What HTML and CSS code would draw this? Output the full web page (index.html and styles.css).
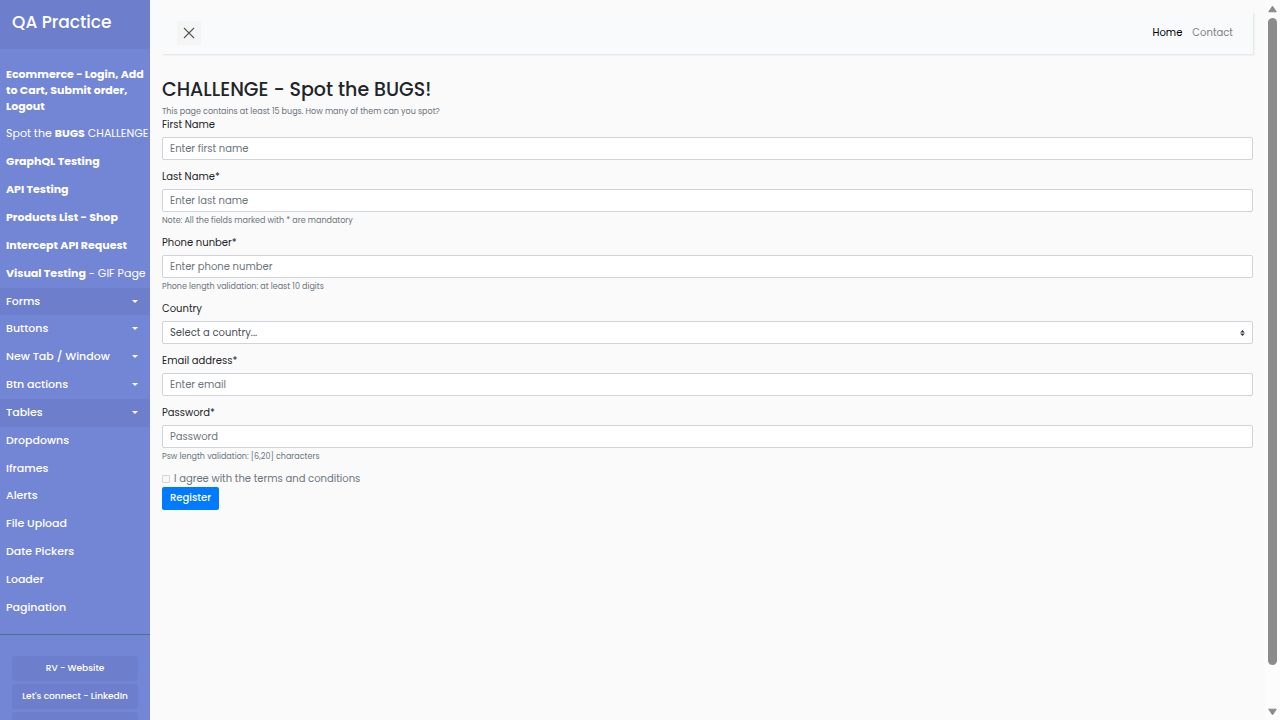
FILE: index.html
```html
<!DOCTYPE html>
<html lang="en">
<head>
<meta charset="utf-8">
<meta name="viewport" content="width=device-width, initial-scale=1">
<title>QA Practice</title>
<link rel="stylesheet" href="styles.css">
</head>
<body>
<div class="wrapper">
  <nav class="sidebar" aria-label="Sections">
    <header class="sidebar-header"><h3 class="brand">QA Practice</h3></header>
    <ul class="menu">
      <li><a class="menu-link strong lead" href="#">Ecommerce - Login, Add to Cart, Submit order, Logout</a></li>
      <li><a class="menu-link nowrap" href="#">Spot the <b>BUGS</b> CHALLENGE</a></li>
      <li><a class="menu-link strong" href="#">GraphQL Testing</a></li>
      <li><a class="menu-link strong" href="#">API Testing</a></li>
      <li><a class="menu-link strong" href="#">Products List - Shop</a></li>
      <li><a class="menu-link strong" href="#">Intercept API Request</a></li>
      <li><a class="menu-link nowrap" href="#"><b>Visual Testing</b> - GIF Page</a></li>
      <li><a class="menu-link toggle active compact" href="#">Forms</a></li>
      <li><a class="menu-link toggle" href="#">Buttons</a></li>
      <li><a class="menu-link toggle" href="#">New Tab / Window</a></li>
      <li><a class="menu-link toggle" href="#">Btn actions</a></li>
      <li><a class="menu-link toggle active" href="#">Tables</a></li>
      <li><a class="menu-link medium" href="#">Dropdowns</a></li>
      <li><a class="menu-link medium compact" href="#">Iframes</a></li>
      <li><a class="menu-link medium" href="#">Alerts</a></li>
      <li><a class="menu-link medium" href="#">File Upload</a></li>
      <li><a class="menu-link medium" href="#">Date Pickers</a></li>
      <li><a class="menu-link medium" href="#">Loader</a></li>
      <li><a class="menu-link medium" href="#">Pagination</a></li>
    </ul>
    <ul class="ctas">
      <li><a class="cta" href="#">RV - Website</a></li>
      <li><a class="cta" href="#">Let's connect - LinkedIn</a></li>
      <li><a class="cta" href="#" aria-label="More"></a></li>
    </ul>
  </nav>

  <main class="content">
    <nav class="navbar" aria-label="Main">
      <button class="collapse" type="button" aria-label="Toggle sidebar">
        <svg width="12" height="12" viewBox="0 0 12 12"><path d="M1 1l10 10M11 1L1 11" fill="none" stroke="#555" stroke-width="1.1"/></svg>
      </button>
      <div class="nav-links">
        <a class="nav-link current" href="#">Home</a>
        <a class="nav-link" href="#">Contact</a>
      </div>
    </nav>

    <h2 class="title">CHALLENGE - Spot the BUGS!</h2>
    <p class="intro">This page contains at least 15 bugs. How many of them can you spot?</p>

    <form class="form">
      <div class="group">
        <label class="label" for="first">First Name</label>
        <input class="control" id="first" type="text" placeholder="Enter first name">
      </div>
      <div class="group">
        <label class="label" for="last">Last Name*</label>
        <input class="control" id="last" type="text" placeholder="Enter last name">
        <small class="hint">Note: All the fields marked with * are mandatory</small>
      </div>
      <div class="group">
        <label class="label" for="phone">Phone nunber*</label>
        <input class="control" id="phone" type="text" placeholder="Enter phone number">
        <small class="hint">Phone length validation: at least 10 digits</small>
      </div>
      <div class="group">
        <label class="label" for="country">Country</label>
        <div class="select-box">
          <select class="control" id="country"><option>Select a country...</option></select>
          <svg class="select-arrows" width="5" height="6" viewBox="0 0 4 5"><path d="M2 0L0 2h4zm0 5L0 3h4z" fill="#343a40"/></svg>
        </div>
      </div>
      <div class="group">
        <label class="label" for="email">Email address*</label>
        <input class="control" id="email" type="email" placeholder="Enter email">
      </div>
      <div class="group">
        <label class="label" for="password">Password*</label>
        <input class="control" id="password" type="password" placeholder="Password">
        <small class="hint">Psw length validation: [6,20] characters</small>
      </div>
      <div class="check">
        <input class="checkbox" id="terms" type="checkbox" disabled>
        <label for="terms">I agree with the terms and conditions</label>
      </div>
      <button class="register" type="submit">Register</button>
    </form>
  </main>

  <div class="scrollbar" aria-hidden="true">
    <svg width="9" height="8" viewBox="0 0 9 8"><path d="M4.5 1.2L8.3 6.8H.7z" fill="#8b8b8b" stroke="#8b8b8b" stroke-linejoin="round"/></svg>
    <div class="thumb"></div>
    <svg width="9" height="8" viewBox="0 0 9 8"><path d="M4.5 6.8L8.3 1.2H.7z" fill="#8b8b8b" stroke="#8b8b8b" stroke-linejoin="round"/></svg>
  </div>
</div>
</body>
</html>
```
FILE: styles.css
```css
* { box-sizing: border-box; }

body {
  margin: 0;
  background: #fafafa;
  color: #212529;
  font: 10px/16px Poppins, Inter, "Open Sans", sans-serif;
}

a { color: inherit; text-decoration: none; }
ul { list-style: none; margin: 0; padding: 0; }

.wrapper { display: flex; height: 100vh; overflow: hidden; }

/* Sidebar */
.sidebar {
  flex: 0 0 150px;
  overflow: hidden;
  background: #7386d5;
  color: #fff;
}
.sidebar-header { padding: 10px 12px 15px; background: #6d7fcc; }
.brand { margin: 0; font-size: 17px; line-height: 24px; font-weight: 500; }
.menu { padding: 11px 0 12px; border-bottom: 1px solid #47748b; }
.menu-link { display: block; padding: 5px 6px 7px; font-size: 11px; line-height: 16px; }
.menu-link b, .strong { font-weight: 700; }
.medium { font-weight: 500; }
.nowrap { white-space: nowrap; }
.lead { padding-top: 6px; padding-bottom: 6px; }
.compact { padding-top: 6px; padding-bottom: 6px; line-height: 15px; }
.active { background: #6d7fcc; }
.toggle { display: flex; align-items: center; justify-content: space-between; padding-right: 12px; font-weight: 500; }
.toggle::after {
  content: "";
  border: 3px solid transparent;
  border-top-color: #fff;
  border-bottom: 0;
}
.ctas { display: grid; gap: 3px; padding: 21px 12px; }
.cta {
  display: block;
  height: 25px;
  border-radius: 3px;
  background: #6d7fcc;
  font-size: 9px;
  font-weight: 500;
  line-height: 25px;
  text-align: center;
  white-space: nowrap;
}

/* Content */
.content { flex: 1; min-width: 0; padding: 12px; }
.navbar {
  display: flex;
  align-items: center;
  justify-content: space-between;
  margin-bottom: 24px;
  padding: 9px 20px 9px 15px;
  background: #f8fafc;
  box-shadow: 1px 1px 2px rgba(0, 0, 0, 0.1);
}
.collapse {
  display: grid;
  place-items: center;
  width: 24px;
  height: 24px;
  padding: 0;
  border: 0;
  background: #f5f5f5;
}
.nav-links { display: flex; gap: 10px; }
.nav-link { color: #808080; }
.current { color: #000; }
.title { margin: 0 0 4px; font-size: 19px; line-height: 24px; font-weight: 500; }
.intro { margin: 0; color: #6c757d; font-size: 8px; line-height: 11px; }

/* Form */
.group { display: flex; flex-direction: column; margin-bottom: 9px; }
.label { margin-bottom: 4px; }
.control {
  appearance: none;
  width: 100%;
  height: 23px;
  margin: 0;
  padding: 0 7px;
  border: 1px solid #ced4da;
  border-radius: 2px;
  background: #fff;
  color: #495057;
  font: inherit;
}
.control::placeholder { color: #6c757d; opacity: 1; }
.select-box { display: grid; align-items: center; }
.select-box > * { grid-area: 1 / 1; }
.select-arrows { justify-self: end; margin-right: 8px; pointer-events: none; }
.hint { margin-top: 3px; color: #6c757d; font-size: 8px; line-height: 11px; }
.check { display: flex; align-items: center; gap: 4px; color: #6c757d; }
.checkbox {
  appearance: none;
  width: 8px;
  height: 8px;
  margin: 0;
  border: 1px solid #d5d5d5;
  border-radius: 1px;
  background: #f8f8f8;
}
.register {
  display: block;
  height: 23px;
  padding: 0 8px 1px;
  border: 0;
  border-radius: 2px;
  background: #007bff;
  color: #fff;
  font: inherit;
  font-weight: 500;
}

/* Scroll track */
.scrollbar {
  flex: 0 0 15px;
  display: flex;
  flex-direction: column;
  align-items: center;
  padding: 5px 0 4px;
  background: #fcfcfc;
}
.thumb { flex: 0 1 91%; margin: 5px 0 auto; width: 9px; border-radius: 5px; background: #8b8b8b; }
```
